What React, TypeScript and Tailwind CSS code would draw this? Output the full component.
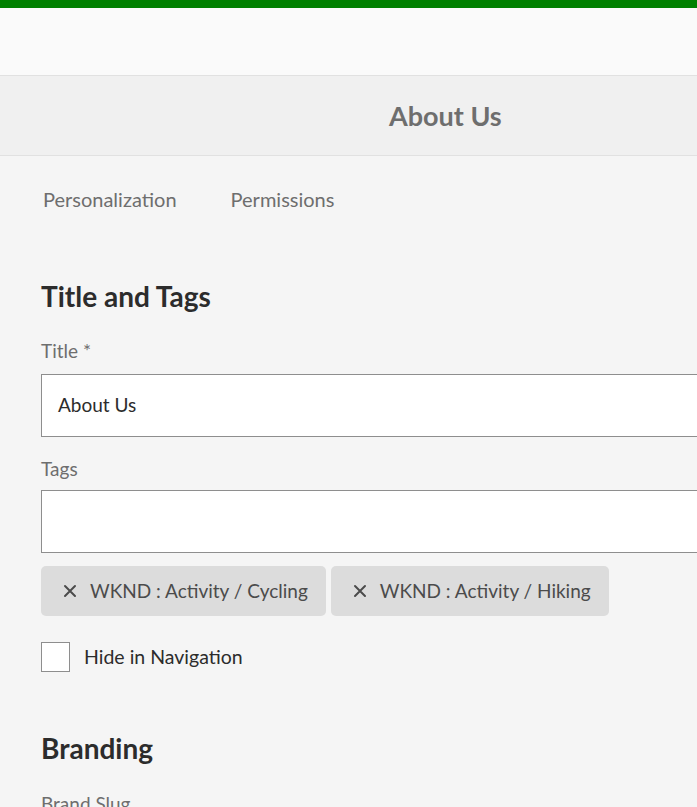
export default function App() {
  const tags = ["WKND : Activity / Cycling", "WKND : Activity / Hiking"];
  return (
    <div
      className="min-h-screen w-[697px] overflow-hidden bg-[#f5f5f5] text-[#2c2c2c]"
      style={{ fontFamily: "Lato, 'Noto Sans', sans-serif" }}
    >
      {/* Top accent */}
      <div className="h-2 bg-[#008000]" />
      <div className="h-[68px] border-b border-[#e1e1e1] bg-[#fafafa]" />

      {/* Page title bar */}
      <div className="flex h-[80px] items-center border-b border-[#e1e1e1] bg-[#f0f0f0] pl-[389px] pt-[2px]">
        <h1 className="whitespace-nowrap text-[27px] font-bold text-[#6e6e6e]">About Us</h1>
      </div>

      {/* Tabs */}
      <div className="flex gap-[54px] pl-[43px] pt-[28px] text-[20px] text-[#6e6e6e]">
        <span>Personalization</span>
        <span>Permissions</span>
      </div>

      {/* Form */}
      <div className="pl-[41px]">
        <h2 className="mt-[68px] text-[28px] font-bold leading-none">Title and Tags</h2>

        <label className="mt-[27px] block text-[19px] text-[#6e6e6e]">Title *</label>
        <div className="mt-[8px] flex h-[63px] w-[700px] items-center border border-[#8e8e8e] bg-white pl-[16px] text-[19px]">
          About Us
        </div>

        <label className="mt-[18px] block text-[19px] text-[#6e6e6e]">Tags</label>
        <div className="mt-[7px] h-[63px] w-[700px] border border-[#8e8e8e] bg-white" />

        <div className="mt-[13px] flex gap-[5px]">
          {tags.map((t) => (
            <div
              key={t}
              className="flex h-[50px] items-center gap-[13px] rounded-[5px] bg-[#dcdcdc] pl-[22px] pr-[18px] text-[19px] text-[#4b4b4b]"
            >
              <svg width="14" height="14" viewBox="0 0 14 14" className="shrink-0">
                <path d="M2 2 L12 12 M12 2 L2 12" stroke="#4b4b4b" strokeWidth="2" strokeLinecap="round" />
              </svg>
              <span className="whitespace-nowrap">{t}</span>
            </div>
          ))}
        </div>

        <div className="mt-[26px] flex items-center gap-[14px]">
          <div className="h-[30px] w-[29px] border border-[#8e8e8e] bg-white" />
          <span className="text-[19.5px]">Hide in Navigation</span>
        </div>

        <h2 className="mt-[62px] text-[28px] font-bold leading-none">Branding</h2>
        <label className="mt-[28px] block text-[19px] text-[#6e6e6e]">Brand Slug</label>
      </div>
    </div>
  );
}
